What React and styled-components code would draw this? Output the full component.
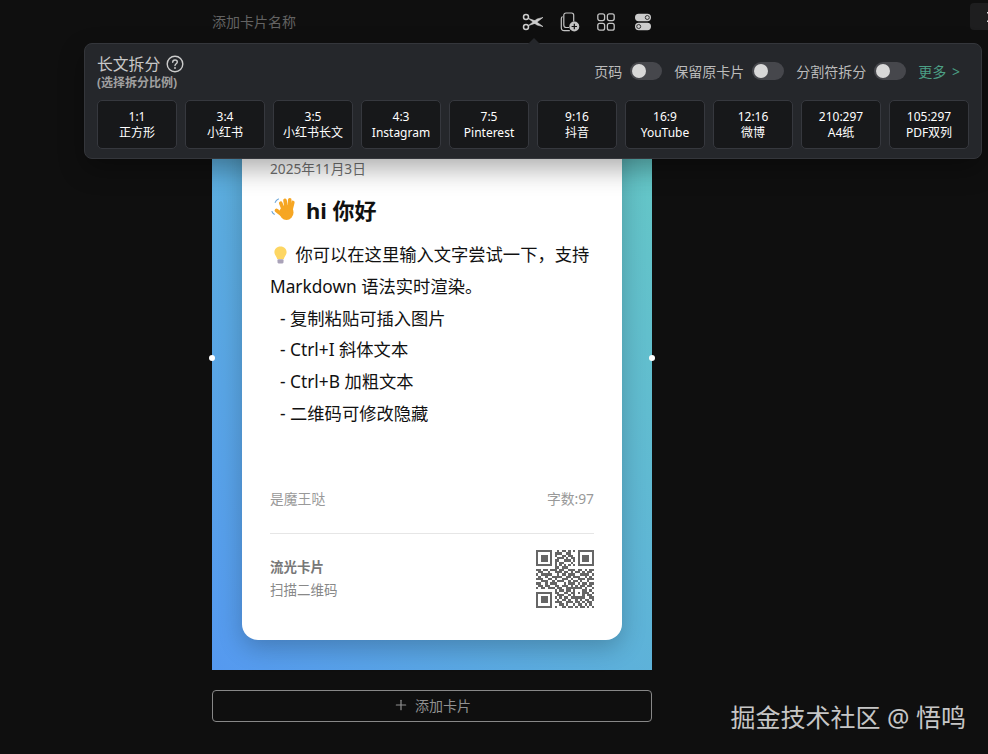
import styled, { createGlobalStyle } from "styled-components"
import { Plus } from "lucide-react"

const ratios = [
    ["1:1", "正方形"],
    ["3:4", "小红书"],
    ["3:5", "小红书长文"],
    ["4:3", "Instagram"],
    ["7:5", "Pinterest"],
    ["9:16", "抖音"],
    ["16:9", "YouTube"],
    ["12:16", "微博"],
    ["210:297", "A4纸"],
    ["105:297", "PDF双列"],
]

const qrRows = [
    "1111111001011010101111111",
    "1000001011100110001000001",
    "1011101010011011001011101",
    "1011101001110101101011101",
    "1011101011001110101011101",
    "1000001010110001001000001",
    "1111111010101010101111111",
    "0000000011011100000000000",
    "1101101110110011101101011",
    "0110010011101101011010110",
    "1011111001011011100111101",
    "0100100111100110111001010",
    "1110011010011101001110111",
    "0011100101110010110100100",
    "1100101110001011101011011",
    "0110110011011101010110110",
    "1011011101100111111101001",
    "0000000010110110100011010",
    "1111111011001101101011101",
    "1000001001110010100010110",
    "1011101010101101111110011",
    "1011101001011010010101101",
    "1011101011100111011010110",
    "1000001000110100101101010",
    "1111111010011011010110101",
]

export default function App () {
    return (
        <Page>
            <GlobalStyle />
            <Header>
                <CardName>添加卡片名称</CardName>
                <Toolbar>
                    <ToolIcon><ScissorsIcon /></ToolIcon>
                    <ToolIcon><AddPageIcon /></ToolIcon>
                    <ToolIcon><GridIcon /></ToolIcon>
                    <ToolIcon><SwitchesIcon /></ToolIcon>
                </Toolbar>
                <CornerButton>
                    <svg width="10" height="10" viewBox="0 0 10 10" stroke="#ddd" strokeWidth="1.500">
                        <path d="M0 0 L10 10 M10 0 L0 10" />
                    </svg>
                </CornerButton>
            </Header>

            <Canvas>
                <Handle side="left" />
                <Handle side="right" />
                <Card>
                    <DateText>2025年11月3日</DateText>
                    <Title><WaveIcon /> hi 你好</Title>
                    <Content>
                        <p><BulbIcon /> 你可以在这里输入文字尝试一下，支持 Markdown 语法实时渲染。</p>
                        <ListItem>- 复制粘贴可插入图片</ListItem>
                        <ListItem>- Ctrl+I 斜体文本</ListItem>
                        <ListItem>- Ctrl+B 加粗文本</ListItem>
                        <ListItem>- 二维码可修改隐藏</ListItem>
                    </Content>
                    <MetaRow>
                        <span>是魔王哒</span>
                        <span>字数:97</span>
                    </MetaRow>
                    <Footer>
                        <div>
                            <BrandName>流光卡片</BrandName>
                            <BrandHint>扫描二维码</BrandHint>
                        </div>
                        <QrCode />
                    </Footer>
                </Card>
            </Canvas>

            <AddCard><Plus size={16} strokeWidth={1.8} /> 添加卡片</AddCard>

            <Popover>
                <PopoverHead>
                    <div>
                        <PopoverTitle>长文拆分 <HelpIcon /></PopoverTitle>
                        <PopoverSub>(选择拆分比例)</PopoverSub>
                    </div>
                    <Options>
                        <OptionLabel>页码</OptionLabel>
                        <Toggle />
                        <OptionLabel>保留原卡片</OptionLabel>
                        <Toggle />
                        <OptionLabel>分割符拆分</OptionLabel>
                        <Toggle />
                        <More>更多 &gt;</More>
                    </Options>
                </PopoverHead>
                <RatioRow>
                    {ratios.map(r => (
                        <RatioButton key={r[0]}>{r[0]}<br />{r[1]}</RatioButton>
                    ))}
                </RatioRow>
            </Popover>

            <Watermark>掘金技术社区 @ 悟鸣</Watermark>
        </Page>
    )
}

function QrCode () {
    return (
        <svg width="58" height="58" viewBox="0 0 25 25" shapeRendering="crispEdges">
            {qrRows.map((row, y) => row.split("").map((cell, x) => (
                cell === "1" ? <rect key={x + "-" + y} x={x} y={y} width="1" height="1" fill="#666" /> : null
            )))}
        </svg>
    )
}

function ScissorsIcon () {
    return (
        <svg width="22" height="18" viewBox="0 0 22 18" fill="none" stroke="#ccc">
            <circle cx="4" cy="4" r="2.500" strokeWidth="1.500" />
            <circle cx="4" cy="14" r="2.500" strokeWidth="1.500" />
            <path d="M6.200 5.300 L10 8.200 L11.800 9.800 L15 12 L21 13.600 L13 7.800 Z" fill="#ccc" strokeWidth=".6" strokeLinejoin="round" />
            <path d="M6.200 12.700 L10 9.800 L12 8.200 L15 6 L21 4.400 L13.500 10.200 Z" fill="#ccc" strokeWidth=".6" strokeLinejoin="round" />
        </svg>
    )
}

function AddPageIcon () {
    return (
        <svg width="20" height="20" viewBox="0 0 20 20" fill="none" stroke="#c4c4c4" strokeWidth="1.200">
            <path d="M2.500 4.500c-.8.500-1.200 1.200-1.200 2.200v8.800c0 1.900 1.200 3.200 3 3.200h5.500" />
            <path d="M3.800 13V3.200C3.800 1.800 4.700 1 6 1h5.500c1.400 0 2.200.9 2.200 2.200v6.300" />
            <path d="M3.800 13c0 1.500.9 2.500 2.400 2.500h3" />
            <circle cx="14.300" cy="14.500" r="5" fill="#c4c4c4" stroke="none" />
            <path d="M14.300 11.800v5.400M11.600 14.500h5.400" stroke="#111" strokeWidth="1.200" />
        </svg>
    )
}

function GridIcon () {
    return (
        <svg width="18" height="18" viewBox="0 0 18 18" fill="none" stroke="#c4c4c4" strokeWidth="1.300">
            <rect x=".8" y=".8" width="6.800" height="6.800" rx="2" />
            <rect x="10.400" y=".8" width="6.800" height="6.800" rx="2" />
            <rect x=".8" y="10.400" width="6.800" height="6.800" rx="2" />
            <rect x="10.400" y="10.400" width="6.800" height="6.800" rx="2" />
        </svg>
    )
}

function SwitchesIcon () {
    return (
        <svg width="18" height="18" viewBox="0 0 18 18">
            <rect x="1" y=".8" width="16" height="7.400" rx="3.700" fill="#ccc" />
            <rect x="1" y="9.800" width="16" height="7.400" rx="3.700" fill="#ccc" />
            <circle cx="13.300" cy="4.500" r="2" fill="#ccc" stroke="#222" strokeWidth=".9" />
            <circle cx="4.700" cy="13.500" r="2" fill="#ccc" stroke="#222" strokeWidth=".9" />
        </svg>
    )
}

function HelpIcon () {
    return (
        <svg width="18" height="18" viewBox="0 0 18 18" fill="none" stroke="#ccc" strokeWidth="1.400">
            <circle cx="9" cy="9" r="7.800" />
            <path d="M6.700 7.200c0-1.400 1-2.200 2.300-2.200s2.300.8 2.300 2c0 1.700-2.300 1.700-2.300 3.500" strokeLinecap="round" />
            <circle cx="9" cy="13" r=".9" fill="#ccc" stroke="none" />
        </svg>
    )
}

function WaveIcon () {
    return (
        <EmojiSvg width="26" height="24" viewBox="0 0 26 24">
            <g fill="#f6a623">
                <ellipse cx="16.500" cy="15.500" rx="7" ry="7.500" />
                <rect x="10.500" y="4" width="3.600" height="12" rx="1.800" transform="rotate(-22 12.300 10)" />
                <rect x="14" y="1.500" width="3.600" height="13" rx="1.800" transform="rotate(-10 15.800 8)" />
                <rect x="17.600" y="1" width="3.600" height="13" rx="1.800" transform="rotate(4 19.400 8)" />
                <rect x="20.200" y="3.500" width="3.400" height="12" rx="1.700" transform="rotate(14 21.900 9.500)" />
                <rect x="4" y="13.500" width="10" height="3.800" rx="1.900" transform="rotate(38 9 15.400)" />
            </g>
            <path d="M8.500 2C6.800 2.600 5.700 3.800 5.200 5.400M2 14.500c.4 1.300 1.200 2.200 2.300 2.800" fill="none" stroke="#6aa5d8" strokeWidth="1.100" strokeLinecap="round" />
        </EmojiSvg>
    )
}

function BulbIcon () {
    return (
        <EmojiSvg width="15" height="18" viewBox="0 0 16 19">
            <path d="M8 .5C4 .5 1.500 3.300 1.500 6.500c0 3 2.500 4.300 3 7.500h7c.5-3.200 3-4.500 3-7.500C14.500 3.300 12 .5 8 .5z" fill="#fdd663" />
            <rect x="4.800" y="14" width="6.400" height="4.500" rx="1.200" fill="#a9a2b8" />
        </EmojiSvg>
    )
}

const GlobalStyle = createGlobalStyle`
    html, body {
        margin: 0;
        height: 100%;
        background-color: #0f0f0f;
    }
    * {
        box-sizing: border-box;
    }
`

const Page = styled.div`
    position: relative;
    width: 988px;
    height: 754px;
    overflow: hidden;
    padding-left: 212px;
    background-color: #0f0f0f;
    font-family: "Noto Sans", "Noto Sans CJK SC", sans-serif;
`

const Header = styled.div`
    display: flex;
    align-items: center;
    height: 44px;
    padding-bottom: 1px;
`

const CardName = styled.span`
    flex-shrink: 0;
    width: 310px;
    padding-bottom: 1px;
    font-size: 14px;
    color: #636363;
`

const Toolbar = styled.div`
    display: flex;
    flex-shrink: 0;
    align-items: center;
    gap: 14.500px;
`

const ToolIcon = styled.div`
    display: flex;
    align-items: center;
    justify-content: center;
    width: 22px;
    color: #ccc;
`

const CornerButton = styled.div`
    display: flex;
    flex-shrink: 0;
    align-items: center;
    align-self: flex-start;
    width: 34px;
    height: 27px;
    margin: 3px 0 0 316px;
    padding-left: 17px;
    border-radius: 4px;
    background-color: #1e1e1f;
`

const Canvas = styled.div`
    position: relative;
    width: 440px;
    height: 626px;
    padding: 30px;
    background: linear-gradient(to top right, #5599f0, #66cbc2);
`

const Handle = styled.span`
    position: absolute;
    top: 311px;
    ${props => props.side}: -3px;
    width: 6px;
    height: 6px;
    border-radius: 50%;
    background-color: white;
`

const Card = styled.div`
    display: flex;
    flex-direction: column;
    height: 566px;
    padding: 85px 28px 32px;
    border-radius: 16px;
    background-color: white;
    box-shadow: 0 8px 24px rgba(0, 0, 0, 0.22);
`

const DateText = styled.div`
    font-size: 13.700px;
    line-height: 20px;
    color: #707070;
`

const Title = styled.div`
    display: flex;
    align-items: center;
    gap: 7px;
    height: 32px;
    margin-top: 14px;
    margin-left: -3px;
    font-size: 22px;
    font-weight: 700;
    color: #111;
`

const EmojiSvg = styled.svg`
    flex-shrink: 0;
    margin-left: 3px;
    margin-right: 3px;
    vertical-align: -3px;
`

const Content = styled.div`
    margin-top: 14px;
    font-size: 17.300px;
    line-height: 31.800px;
    color: #111;
    p {
        margin: 0;
    }
`

const ListItem = styled.div`
    padding-left: 10px;
`

const MetaRow = styled.div`
    display: flex;
    justify-content: space-between;
    margin-top: auto;
    padding-bottom: 24px;
    border-bottom: 1px solid #e6e6e6;
    font-size: 13.800px;
    line-height: 20px;
    color: #999;
`

const Footer = styled.div`
    display: flex;
    align-items: center;
    justify-content: space-between;
    height: 58px;
    margin-top: 16px;
`

const BrandName = styled.div`
    font-size: 13.500px;
    font-weight: 700;
    line-height: 22px;
    color: #777;
`

const BrandHint = styled.div`
    font-size: 13.500px;
    line-height: 24px;
    color: #888;
`

const AddCard = styled.div`
    display: flex;
    align-items: center;
    justify-content: center;
    gap: 6px;
    width: 440px;
    height: 32px;
    margin-top: 20px;
    padding-bottom: 2px;
    border: 1px solid #888;
    border-radius: 4px;
    font-size: 14px;
    color: #919191;
`

const Popover = styled.div`
    position: absolute;
    top: 43px;
    left: 84px;
    width: 898px;
    height: 116px;
    padding: 10px 12px 0 12px;
    border: 1px solid #34363b;
    border-radius: 8px;
    background-color: #25272b;
    box-shadow: 0 10px 26px rgba(0, 0, 0, 0.32);
    &::before {
        content: "";
        position: absolute;
        top: -6px;
        left: 443px;
        border-left: 6px solid transparent;
        border-right: 6px solid transparent;
        border-bottom: 6px solid #25272b;
    }
`

const PopoverHead = styled.div`
    display: flex;
    align-items: center;
    justify-content: space-between;
    height: 38px;
`

const PopoverTitle = styled.div`
    display: flex;
    align-items: center;
    gap: 6px;
    font-size: 15.800px;
    line-height: 20px;
    color: #c8c8c8;
`

const PopoverSub = styled.div`
    font-size: 12px;
    font-weight: 700;
    line-height: 18px;
    color: #a0a0a0;
`

const Options = styled.div`
    display: flex;
    align-items: center;
    padding-right: 9px;
    padding-bottom: 4px;
`

const OptionLabel = styled.span`
    margin-right: 8px;
    font-size: 14px;
    color: #bbb;
`

const Toggle = styled.span`
    display: block;
    width: 32px;
    height: 18px;
    margin-right: 12px;
    padding: 2px;
    border-radius: 9px;
    background-color: #46474c;
    &::after {
        content: "";
        display: block;
        width: 14px;
        height: 14px;
        border-radius: 50%;
        background-color: #d8d8d8;
    }
`

const More = styled.span`
    font-size: 14px;
    word-spacing: 2px;
    color: #4c9f85;
`

const RatioRow = styled.div`
    display: flex;
    gap: 8px;
    margin-top: 8px;
`

const RatioButton = styled.div`
    width: 80px;
    height: 49px;
    padding-top: 8px;
    border: 1px solid #36383e;
    border-radius: 5px;
    background-color: #17181a;
    font-size: 12px;
    line-height: 16px;
    text-align: center;
    color: white;
`

const Watermark = styled.div`
    position: absolute;
    right: 22px;
    bottom: 19px;
    font-size: 25px;
    line-height: 36px;
    white-space: nowrap;
    color: #c6c6c6;
`
